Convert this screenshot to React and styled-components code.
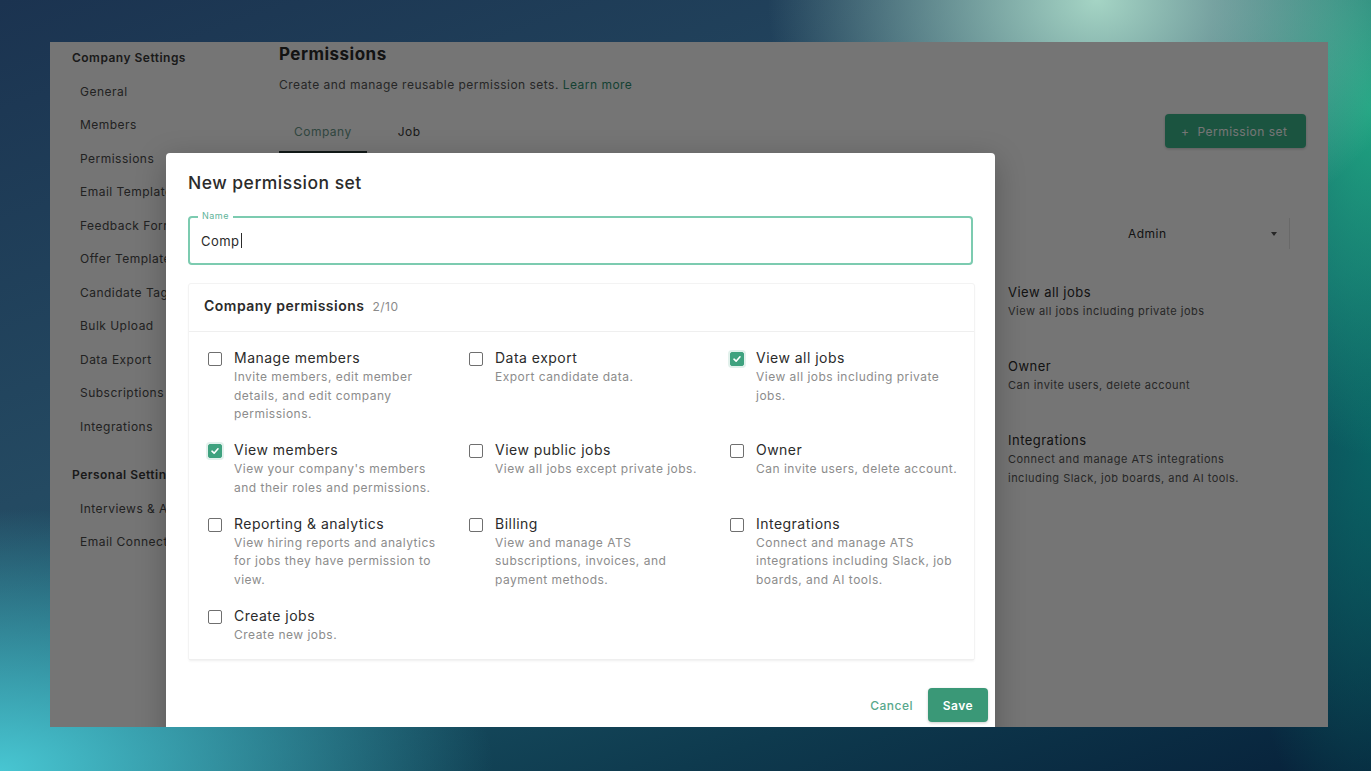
import styled, { createGlobalStyle } from "styled-components";

const GlobalStyle = createGlobalStyle`
  html, body {
    margin: 0;
    padding: 0;
    height: 100%;
    overflow: hidden;
  }
  body {
    font-family: Inter, "Noto Sans", "Liberation Sans", sans-serif;
    letter-spacing: 0.03em;
    -webkit-font-smoothing: antialiased;
  }
`;

const companyMenu = [
  "General",
  "Members",
  "Permissions",
  "Email Templates",
  "Feedback Forms",
  "Offer Templates",
  "Candidate Tags",
  "Bulk Upload",
  "Data Export",
  "Subscriptions",
  "Integrations",
];

const personalMenu = ["Interviews & Availability", "Email Connection"];

const sideList = [
  { title: "View all jobs", desc: ["View all jobs including private jobs"] },
  { title: "Owner", desc: ["Can invite users, delete account"] },
  {
    title: "Integrations",
    desc: ["Connect and manage ATS integrations", "including Slack, job boards, and AI tools."],
  },
];

const permissions = [
  { title: "Manage members", desc: "Invite members, edit member details, and edit company permissions." },
  { title: "Data export", desc: "Export candidate data." },
  { title: "View all jobs", desc: "View all jobs including private jobs.", checked: true },
  { title: "View members", desc: "View your company's members and their roles and permissions.", checked: true },
  { title: "View public jobs", desc: "View all jobs except private jobs." },
  { title: "Owner", desc: "Can invite users, delete account." },
  { title: "Reporting & analytics", desc: "View hiring reports and analytics for jobs they have permission to view." },
  { title: "Billing", desc: "View and manage ATS subscriptions, invoices, and payment methods." },
  { title: "Integrations", desc: "Connect and manage ATS integrations including Slack, job boards, and AI tools." },
  { title: "Create jobs", desc: "Create new jobs." },
];

export default function App() {
  const checkedCount = permissions.filter((p) => p.checked).length;
  return (
    <>
      <GlobalStyle />
      <Backdrop>
        <Frame>
          <Sidebar>
            <SideHeading>Company Settings</SideHeading>
            {companyMenu.map((item) => (
              <SideItem key={item}>{item}</SideItem>
            ))}
            <SideHeading spaced>Personal Settings</SideHeading>
            {personalMenu.map((item) => (
              <SideItem key={item}>{item}</SideItem>
            ))}
          </Sidebar>

          <Main>
            <PageTitle>Permissions</PageTitle>
            <PageSubtitle>
              Create and manage reusable permission sets. <LearnMore>Learn more</LearnMore>
            </PageSubtitle>
            <TabsRow>
              <Tabs>
                <Tab active>Company</Tab>
                <Tab>Job</Tab>
              </Tabs>
              <PrimaryButton>
                <span>+</span> Permission set
              </PrimaryButton>
            </TabsRow>
            <Body>
              <BodyFill />
              <RolePanel>
                <RoleSelect>
                  <span>Admin</span>
                  <Caret />
                </RoleSelect>
                <RoleList>
                  {sideList.map((r) => (
                    <RoleItem key={r.title}>
                      <RoleTitle>{r.title}</RoleTitle>
                      {r.desc.map((d) => (
                        <RoleDesc key={d}>{d}</RoleDesc>
                      ))}
                    </RoleItem>
                  ))}
                </RoleList>
              </RolePanel>
            </Body>
          </Main>

          <Dim />

          <Modal>
            <ModalTitle>New permission set</ModalTitle>
            <Field>
              <FieldLabel>Name</FieldLabel>
              <FieldValue>
                Comp<Cursor />
              </FieldValue>
            </Field>

            <Section>
              <SectionHeader>
                <SectionTitle>Company permissions</SectionTitle>
                <SectionCount>
                  {checkedCount}/{permissions.length}
                </SectionCount>
              </SectionHeader>
              <Grid>
                {permissions.map((p) => (
                  <PermItem key={p.title}>
                    <Checkbox checked={p.checked}>
                      {p.checked && (
                        <svg width="10" height="10" viewBox="0 0 10 10">
                          <path d="M2 5.2 L4.1 7.2 L8 2.8" fill="none" stroke="#fff" strokeWidth="1.6" strokeLinecap="round" strokeLinejoin="round" />
                        </svg>
                      )}
                    </Checkbox>
                    <PermText>
                      <PermTitle>{p.title}</PermTitle>
                      <PermDesc>{p.desc}</PermDesc>
                    </PermText>
                  </PermItem>
                ))}
              </Grid>
            </Section>

            <Footer>
              <TextButton>Cancel</TextButton>
              <SaveButton>Save</SaveButton>
            </Footer>
          </Modal>
        </Frame>
      </Backdrop>
    </>
  );
}

const Backdrop = styled.div`
  width: 100vw;
  height: 100vh;
  box-sizing: border-box;
  padding: 42px 43px 0 50px;
  background:
    radial-gradient(ellipse 24% 34% at 80% 0%, rgba(172, 220, 202, 0.95), rgba(172, 220, 202, 0) 100%),
    radial-gradient(ellipse 12% 45% at 100% 14%, rgba(30, 168, 130, 0.95), rgba(30, 168, 130, 0) 100%),
    radial-gradient(ellipse 10% 55% at 100% 58%, rgba(8, 104, 102, 0.85), rgba(8, 104, 102, 0) 100%),
    radial-gradient(ellipse 36% 34% at 0% 100%, rgba(72, 198, 210, 1), rgba(72, 198, 210, 0) 100%),
    linear-gradient(160deg, #1b3350 0%, #244a62 40%, #1a5466 60%, #0e3a4e 80%, #07213a 100%);
`;

const Frame = styled.div`
  position: relative;
  display: flex;
  width: 1278px;
  height: 685px;
  background: #ffffff;
  overflow: hidden;
`;

const Sidebar = styled.nav`
  display: flex;
  flex-direction: column;
  width: 207px;
  padding: 8px 0 0 22px;
  flex-shrink: 0;
`;

const SideHeading = styled.div`
  height: 33.5px;
  line-height: 16px;
  font-size: 12px;
  font-weight: 600;
  color: #3a3a3a;
  white-space: nowrap;
  margin-top: ${({ spaced }) => (spaced ? "15px" : "0")};
`;

const SideItem = styled.div`
  height: 33.5px;
  line-height: 16px;
  padding-left: 8px;
  font-size: 12px;
  color: #4a4a4a;
  white-space: nowrap;
`;

const Main = styled.main`
  flex: 1;
  display: flex;
  flex-direction: column;
  padding: 1px 22px 0 0;
`;

const PageTitle = styled.h1`
  margin: 0;
  font-size: 17px;
  font-weight: 700;
  line-height: 22px;
  color: #2a2a2a;
`;

const PageSubtitle = styled.p`
  margin: 12px 0 0;
  font-size: 12px;
  line-height: 16px;
  color: #555;
`;

const LearnMore = styled.span`
  color: #2f8f70;
`;

const TabsRow = styled.div`
  display: flex;
  align-items: center;
  justify-content: space-between;
  margin-top: 15px;
`;

const Tabs = styled.div`
  display: flex;
  align-self: flex-start;
  margin-top: 8px;
`;

const Tab = styled.div`
  padding: 8px 15px 11px;
  margin-right: ${({ active }) => (active ? "16px" : "0")};
  font-size: 12px;
  line-height: 16px;
  color: ${({ active }) => (active ? "#6c9a8c" : "#3a3a3a")};
  border-bottom: 3px solid ${({ active }) => (active ? "#2a3a38" : "transparent")};
`;

const PrimaryButton = styled.button`
  display: flex;
  align-items: center;
  gap: 8px;
  height: 34px;
  padding: 0 16px;
  width: 141px;
  border: none;
  border-radius: 4px;
  background: #3cb78d;
  color: #ffffff;
  font-family: inherit;
  letter-spacing: inherit;
  font-size: 12px;
  box-shadow: 0 1px 3px rgba(0, 0, 0, 0.2);
`;

const Body = styled.div`
  flex: 1;
  display: flex;
`;

const BodyFill = styled.div`
  flex: 1;
`;

const RolePanel = styled.div`
  width: 298px;
  display: flex;
  flex-direction: column;
  padding-top: 64px;
`;

const RoleSelect = styled.div`
  align-self: flex-end;
  display: flex;
  align-items: center;
  justify-content: space-between;
  box-sizing: border-box;
  width: 178px;
  height: 31px;
  margin-right: 16px;
  padding: 0 12px 0 16px;
  border-right: 1px solid #e4e4e4;
  font-size: 12px;
  color: #2a2a2a;
`;

const Caret = styled.span`
  width: 0;
  height: 0;
  border-left: 3px solid transparent;
  border-right: 3px solid transparent;
  border-top: 4px solid #555;
`;

const RoleList = styled.div`
  display: flex;
  flex-direction: column;
  gap: 37px;
  margin-top: 34px;
`;

const RoleItem = styled.div`
  display: flex;
  flex-direction: column;
  gap: 2px;
`;

const RoleTitle = styled.div`
  font-size: 13px;
  line-height: 18px;
  color: #2a2a2a;
`;

const RoleDesc = styled.div`
  font-size: 11px;
  line-height: 17px;
  color: #555;
`;

const Dim = styled.div`
  position: absolute;
  inset: 0;
  background: rgba(0, 0, 0, 0.54);
`;

const Modal = styled.div`
  position: absolute;
  left: 116px;
  top: 111px;
  width: 829px;
  box-sizing: border-box;
  padding: 18px 7px 24px 22px;
  background: #ffffff;
  border-radius: 4px;
  box-shadow: 0 8px 30px rgba(0, 0, 0, 0.25);
`;

const ModalTitle = styled.h2`
  margin: 0;
  font-size: 17.5px;
  font-weight: 500;
  line-height: 24px;
  color: #2b2b2b;
`;

const Field = styled.div`
  position: relative;
  box-sizing: border-box;
  width: 785px;
  height: 49px;
  margin-top: 21px;
  border: 2px solid #7ccbb0;
  border-radius: 4px;
  display: flex;
  align-items: center;
  padding-left: 11px;
`;

const FieldLabel = styled.span`
  position: absolute;
  left: 8px;
  top: -7px;
  padding: 0 4px;
  background: #ffffff;
  font-size: 9px;
  line-height: 10px;
  color: #5fb49a;
`;

const FieldValue = styled.span`
  display: flex;
  align-items: center;
  font-size: 13px;
  color: #2b2b2b;
`;

const Cursor = styled.span`
  display: inline-block;
  width: 1px;
  height: 15px;
  margin-left: 1px;
  background: #2b2b2b;
`;

const Section = styled.section`
  width: 785px;
  margin-top: 18px;
  border: 1px solid #f3f3f3;
  border-radius: 3px;
  box-shadow: 0 1px 2px rgba(0, 0, 0, 0.03);
`;

const SectionHeader = styled.div`
  display: flex;
  align-items: baseline;
  gap: 8px;
  height: 48px;
  padding: 13px 15px 0;
  box-sizing: border-box;
  border-bottom: 1px solid #efefef;
`;

const SectionTitle = styled.span`
  font-size: 14px;
  font-weight: 600;
  color: #2b2b2b;
`;

const SectionCount = styled.span`
  font-size: 12px;
  color: #8a8a8a;
`;

const Grid = styled.div`
  display: grid;
  grid-template-columns: repeat(3, 261px);
  row-gap: 16.5px;
  padding: 16px 0 15px 19px;
  border-bottom: 1px solid #efefef;
`;

const PermItem = styled.div`
  display: flex;
  align-items: flex-start;
  gap: 12px;
`;

const Checkbox = styled.span`
  flex-shrink: 0;
  display: flex;
  align-items: center;
  justify-content: center;
  box-sizing: border-box;
  width: 14px;
  height: 14px;
  margin-top: 4px;
  border-radius: 2px;
  border: 1.5px solid ${({ checked }) => (checked ? "#3fa27f" : "#6f6f6f")};
  background: ${({ checked }) => (checked ? "#3fa27f" : "#ffffff")};
  box-shadow: ${({ checked }) => (checked ? "0 0 0 2px rgba(63, 162, 127, 0.15)" : "none")};
`;

const PermText = styled.div`
  display: flex;
  flex-direction: column;
  width: 206px;
`;

const PermTitle = styled.span`
  font-size: 14px;
  line-height: 20px;
  color: #2b2b2b;
`;

const PermDesc = styled.span`
  font-size: 12px;
  line-height: 18.5px;
  color: #8c8c8c;
`;

const Footer = styled.div`
  display: flex;
  justify-content: flex-end;
  align-items: center;
  gap: 15px;
  margin-top: 27px;
`;

const TextButton = styled.button`
  border: none;
  background: none;
  padding: 0;
  font-family: inherit;
  letter-spacing: inherit;
  font-size: 12px;
  font-weight: 500;
  color: #58a88c;
`;

const SaveButton = styled.button`
  width: 60px;
  height: 34px;
  border: none;
  border-radius: 4px;
  background: #3a9877;
  color: #ffffff;
  font-family: inherit;
  letter-spacing: inherit;
  font-size: 12px;
  font-weight: 600;
  box-shadow: 0 1px 3px rgba(0, 0, 0, 0.2);
`;
